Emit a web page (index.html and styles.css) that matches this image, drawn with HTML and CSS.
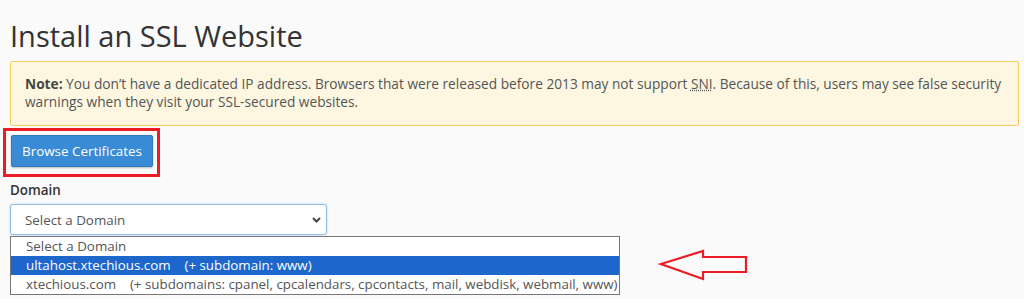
FILE: index.html
```html
<!DOCTYPE html>
<html>
<head>
<meta charset="utf-8">
<link rel="stylesheet" href="styles.css">
</head>
<body>
<div class="page">
  <h1 class="title">Install an SSL Website</h1>
  <div class="note">
    <strong>Note:</strong> You don’t have a dedicated IP address. Browsers that were released before 2013 may not support <abbr class="abbr">SNI</abbr>. Because of this, users may see false security warnings when they visit your SSL-secured websites.
  </div>
  <div class="btn-wrap">
    <button class="btn">Browse Certificates</button>
  </div>
  <label class="label">Domain</label>
  <div class="select-wrap">
    <div class="select">
      <span>Select a Domain</span>
      <svg class="chev" width="9" height="6" viewBox="0 0 9 6"><path d="M1 1 L4.5 4.5 L8 1" fill="none" stroke="#444" stroke-width="2"/></svg>
    </div>
    <ul class="list">
      <li class="opt">Select a Domain</li>
      <li class="opt sel">ultahost.xtechious.com&nbsp;&nbsp;&nbsp;&nbsp;(+ subdomain: www)</li>
      <li class="opt">xtechious.com&nbsp;&nbsp;&nbsp;&nbsp;(+ subdomains: cpanel, cpcalendars, cpcontacts, mail, webdisk, webmail, www)</li>
    </ul>
  </div>
  <svg class="arrow" width="96" height="40" viewBox="0 0 96 40">
    <path d="M6 18 L48 5 L48 11 L91 11 L91 26 L48 26 L48 33 Z" fill="none" stroke="#ec1c26" stroke-width="2.2" stroke-linejoin="miter"/>
  </svg>
</div>
</body>
</html>
```
FILE: styles.css
```css
html, body {
  margin: 0;
  padding: 0;
  background: #fafafa;
}
.page {
  position: relative;
  padding: 20px 5px 0 10px;
  height: 279px;
  font-family: "Open Sans", "Liberation Sans", sans-serif;
  color: #333;
}
.title {
  margin: 0;
  font-size: 29px;
  font-weight: 400;
  line-height: 31px;
  color: #333;
}
.note {
  margin-top: 10px;
  background: #fdf7e1;
  border: 1px solid #f2cf5c;
  border-radius: 2px;
  padding: 13px 14px 14px 14px;
  font-size: 13.7px;
  line-height: 18px;
  color: #555;
}
.note strong {
  font-weight: 700;
  color: #444;
}
.abbr {
  text-decoration: underline dotted;
}
.btn-wrap {
  position: relative;
  margin-top: 9px;
  margin-left: 1px;
  display: inline-block;
}
.btn-wrap::before {
  content: "";
  position: absolute;
  left: -8px;
  top: -7px;
  right: -7px;
  bottom: -10px;
  border: 3px solid #ec1c26;
  pointer-events: none;
}
.btn {
  display: block;
  height: 32px;
  width: 142px;
  padding: 0;
  background: #3a8bd5;
  border: 1px solid #2f7bc2;
  border-radius: 2px;
  color: #fff;
  font-family: "Open Sans", "Liberation Sans", sans-serif;
  font-size: 13.4px;
  box-shadow: 0 1px 2px rgba(0,0,0,0.25);
}
.label {
  display: block;
  margin-top: 14px;
  font-size: 13.4px;
  font-weight: 600;
  line-height: 18px;
  color: #333;
}
.select-wrap {
  position: relative;
  margin-top: 5px;
}
.select {
  box-sizing: border-box;
  width: 317px;
  height: 31px;
  border: 1px solid #8fbde8;
  border-radius: 3px;
  background: #fff;
  padding: 0 14px;
  display: flex;
  align-items: center;
  justify-content: space-between;
  font-size: 13.35px;
  color: #555;
  box-shadow: 0 0 2px rgba(102,175,233,0.5);
}
.chev {
  margin-right: -9px;
}
.list {
  position: absolute;
  left: 0;
  top: 32px;
  margin: 0;
  padding: 0;
  list-style: none;
  box-sizing: border-box;
  width: 610px;
  border: 1px solid #767676;
  background: #fff;
  font-size: 13.35px;
  color: #555;
}
.opt {
  line-height: 19px;
  height: 19px;
  padding: 0 15px;
  white-space: nowrap;
}
.opt.sel {
  background: #1c66cc;
  color: #fff;
}
.arrow {
  position: absolute;
  left: 655px;
  top: 246px;
}
```
